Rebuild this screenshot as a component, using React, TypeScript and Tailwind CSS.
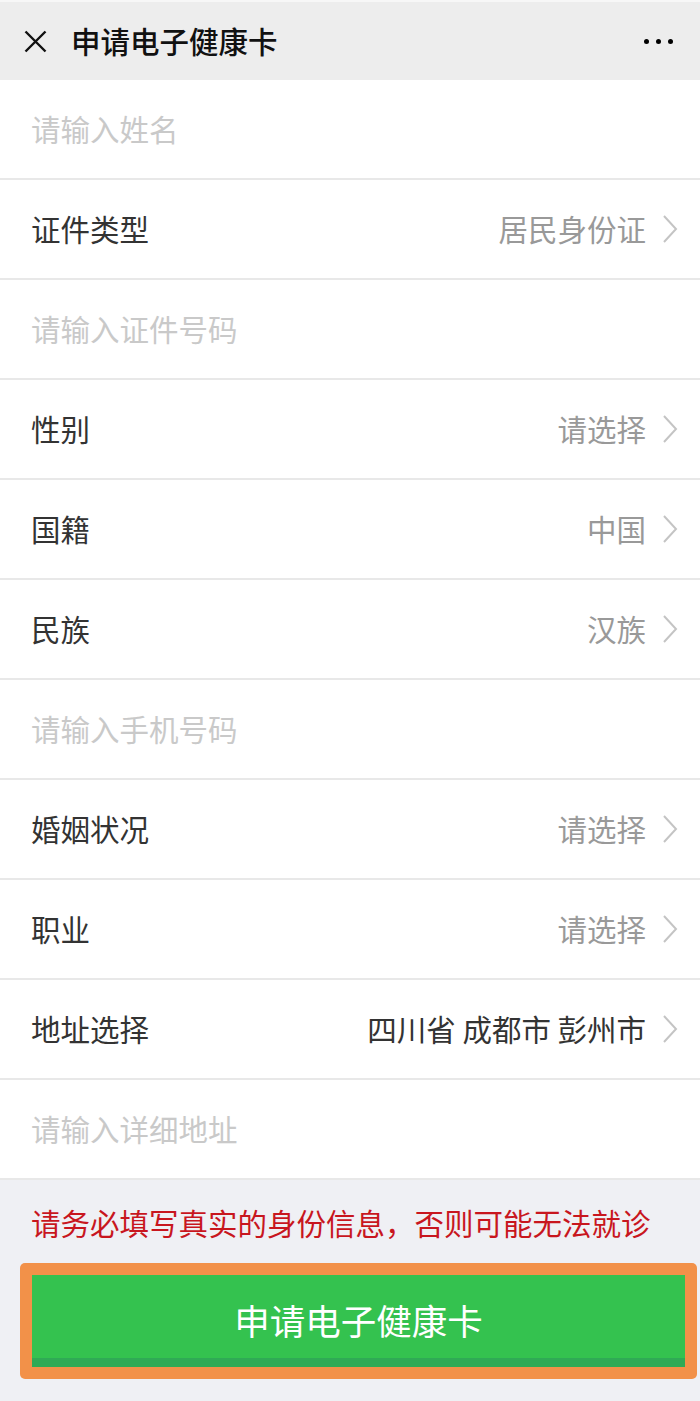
import React from 'react';

type Row =
  | { kind: 'input'; placeholder: string }
  | { kind: 'select'; label: string; value: string; dark?: boolean };

const rows: Row[] = [
  { kind: 'input', placeholder: '请输入姓名' },
  { kind: 'select', label: '证件类型', value: '居民身份证' },
  { kind: 'input', placeholder: '请输入证件号码' },
  { kind: 'select', label: '性别', value: '请选择' },
  { kind: 'select', label: '国籍', value: '中国' },
  { kind: 'select', label: '民族', value: '汉族' },
  { kind: 'input', placeholder: '请输入手机号码' },
  { kind: 'select', label: '婚姻状况', value: '请选择' },
  { kind: 'select', label: '职业', value: '请选择' },
  { kind: 'select', label: '地址选择', value: '四川省 成都市 彭州市', dark: true },
  { kind: 'input', placeholder: '请输入详细地址' },
];

function Chevron() {
  return (
    <svg width="16" height="28" viewBox="0 0 16 28" fill="none" className="shrink-0">
      <polyline points="2,1 14,14 2,27" stroke="#c4c4c4" strokeWidth="2" fill="none" />
    </svg>
  );
}

export default function App() {
  return (
    <div
      className="w-[700px] h-[1401px] flex flex-col bg-[#eff0f4] overflow-hidden"
      style={{ fontFamily: '"Noto Sans CJK SC", "Noto Sans", sans-serif' }}
    >
      {/* header */}
      <div className="h-[80px] shrink-0 bg-[#ededed] border-t-2 border-[#f7f7f7] flex items-center pl-[24px] pr-[27px]">
        <svg width="23" height="23" viewBox="0 0 23 23" className="shrink-0">
          <path d="M1.5 1.5 L21.5 21.5 M21.5 1.5 L1.5 21.5" stroke="#111" strokeWidth="2.4" />
        </svg>
        <h1 className="ml-[24px] text-[29.5px] leading-none font-medium text-[#111]">申请电子健康卡</h1>
        <div className="ml-auto flex items-center gap-[7px]">
          <span className="w-[5px] h-[5px] rounded-full bg-black" />
          <span className="w-[5px] h-[5px] rounded-full bg-black" />
          <span className="w-[5px] h-[5px] rounded-full bg-black" />
        </div>
      </div>

      {/* form rows */}
      <div className="bg-white">
        {rows.map((row, i) => (
          <div
            key={i}
            className="h-[100px] flex items-center pl-[31px] pr-[22px] border-b-2 border-[#e8e8e8]"
          >
            {row.kind === 'input' ? (
              <span className="text-[29.5px] leading-none text-[#c9c9c9]">{row.placeholder}</span>
            ) : (
              <>
                <span className="text-[29.5px] leading-none text-[#333]">{row.label}</span>
                <div className="ml-auto flex items-center gap-[16px]">
                  <span
                    className={
                      row.dark
                        ? 'text-[29.5px] leading-none text-[#333]'
                        : 'text-[29.5px] leading-none text-[#999]'
                    }
                  >
                    {row.value}
                  </span>
                  <Chevron />
                </div>
              </>
            )}
          </div>
        ))}
      </div>

      {/* footer */}
      <div className="flex-1 flex flex-col">
        <p className="mt-[23px] pl-[31px] text-[29.5px] leading-[38px] text-[#c8161e]">
          请务必填写真实的身份信息，否则可能无法就诊
        </p>
        <div className="mt-[22px] ml-[20px] mr-[3px] rounded-[5px] bg-[#f29149] p-[12px]">
          <button className="w-full h-[92px] bg-[#34c24f] border-b-[9px] border-[#2faa55] flex items-center justify-center text-white text-[35.5px] leading-none pt-[6px]">
            申请电子健康卡
          </button>
        </div>
      </div>
    </div>
  );
}
